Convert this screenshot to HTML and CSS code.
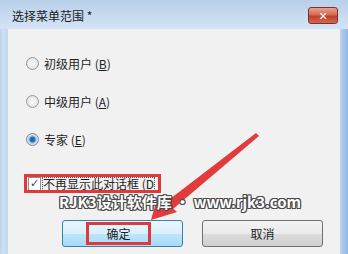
FILE: index.html
```html
<!DOCTYPE html>
<html lang="zh">
<head>
    <meta charset="UTF-8">
    <title>选择菜单范围</title>
    <link rel="stylesheet" href="styles.css">
</head>
<body>
    <div class="window">
        <div class="titlebar">
            <span class="title">选择菜单范围 *</span>
            <span class="close-btn">✕</span>
        </div>
        <div class="client">
            <div class="radio-row"><span class="radio"></span>初级用户 (<u>B</u>)</div>
            <div class="radio-row"><span class="radio"></span>中级用户 (<u>A</u>)</div>
            <div class="radio-row"><span class="radio checked"></span>专家 (<u>E</u>)</div>
            <div class="check-row">
                <span class="check-mark">✓</span><span class="check-text">不再显示此对话框 (D</span>
            </div>
            <div class="buttons">
                <div class="btn btn-default"><span class="btn-hl">确定</span></div>
                <div class="btn">取消</div>
            </div>
        </div>

        <!-- 箭头和水印 -->
        <svg class="arrow" width="348" height="254" viewBox="0 0 348 254">
            <polygon points="256,133 259,136 173,209 166,202" fill="#e23b3e"/>
            <polygon points="151,220 158,195 177,212" fill="#e23b3e"/>
        </svg>
        <div class="watermark">RJK3设计软件库 • www.rjk3.com</div>
    </div>
</body>
</html>
```

FILE: styles.css
```css
body {
    margin: 0;
    font-family: "Noto Sans CJK SC", "DejaVu Sans", sans-serif;
    font-size: 12px;
    color: #1e1e1e;
}
.window {
    position: relative;
    width: 348px;
    height: 254px;
    overflow: hidden;
    background: linear-gradient(to right, #bcd3ec 0, #cfe0f3 3px, #c2d7ee 8px, #c2d7ee 340px, #a9c7e8 343px, #8fb8e4 348px);
    display: flex;
    flex-direction: column;
}
.titlebar {
    height: 29px;
    display: flex;
    align-items: center;
    padding: 0 10px 0 12px;
    background: linear-gradient(#b8d0ea, #c9dcf1 60%, #d3e3f4);
}
.title {
    flex: 1;
    font-size: 12px;
    color: #1b1b1b;
    padding-top: 2px;
}
.close-btn {
    width: 28px;
    height: 15px;
    border: 1px solid #7a3326;
    border-radius: 3px;
    background: linear-gradient(#e9a08f, #d46a55 45%, #c0402c 55%, #cf6a52);
    color: #fff;
    font-size: 11px;
    font-weight: bold;
    line-height: 15px;
    text-align: center;
    margin-top: 1px;
}
.client {
    flex: 1;
    margin: 0 8px;
    background: #f1f1f1;
    padding: 26px 0 0 18px;
}
.radio-row {
    height: 16px;
    display: flex;
    align-items: center;
    margin-bottom: 22px;
}
.radio {
    width: 11px;
    height: 11px;
    border-radius: 50%;
    border: 1px solid #9a9a9a;
    background: radial-gradient(circle, #f4f4f4 30%, #d8d8d8 90%);
    margin-right: 5px;
    box-sizing: content-box;
}
.radio.checked {
    background: radial-gradient(circle, #2c5f93 0, #2d6fae 30%, #9cc2e6 45%, #e8eef5 70%);
    border-color: #6d86a3;
}
.check-row {
    display: inline-flex;
    align-items: center;
    margin: 5px 0 0 -2px;
    border: 3px solid #e0393c;
    height: 13px;
    padding: 0 0 0 1px;
    width: 130px;
    overflow: hidden;
}
.check-mark {
    width: 11px;
    height: 12px;
    background: #fff;
    border: 1px solid #8e8f8f;
    color: #2a4d7a;
    font-size: 11px;
    line-height: 12px;
    text-align: center;
    margin-right: 1px;
    font-family: "DejaVu Sans", sans-serif;
}
.check-text {
    white-space: nowrap;
    border: 1px dotted #555;
    line-height: 12px;
}
.buttons {
    display: flex;
    gap: 19px;
    margin: 27px 0 0 36px;
}
.btn {
    width: 119px;
    height: 25px;
    border: 1px solid #707070;
    border-radius: 3px;
    background: linear-gradient(#f2f2f2 0, #ebebeb 50%, #dddddd 51%, #cfcfcf);
    display: flex;
    align-items: center;
    justify-content: center;
    font-size: 12px;
}
.btn-default {
    border-color: #3c7fb1;
    background: linear-gradient(#eaf6fd 0, #d9f0fc 50%, #bee6fd 51%, #a7d9f5);
}
.btn-hl {
    width: 59px;
    height: 17px;
    border: 3px solid #e0393c;
    display: flex;
    align-items: center;
    justify-content: center;
    margin-left: -8px;
}
.watermark {
    position: absolute;
    left: 59px;
    top: 191px;
    font-size: 15px;
    line-height: 22px;
    font-weight: bold;
    color: #fff;
    white-space: nowrap;
    text-shadow: 1px 0 #4a4a4a, -1px 0 #4a4a4a, 0 1px #4a4a4a, 0 -1px #4a4a4a,
        1px 1px #4a4a4a, -1px -1px #4a4a4a, 1px -1px #4a4a4a, -1px 1px #4a4a4a;
}
.arrow {
    position: absolute;
    left: 0;
    top: 0;
}
```
